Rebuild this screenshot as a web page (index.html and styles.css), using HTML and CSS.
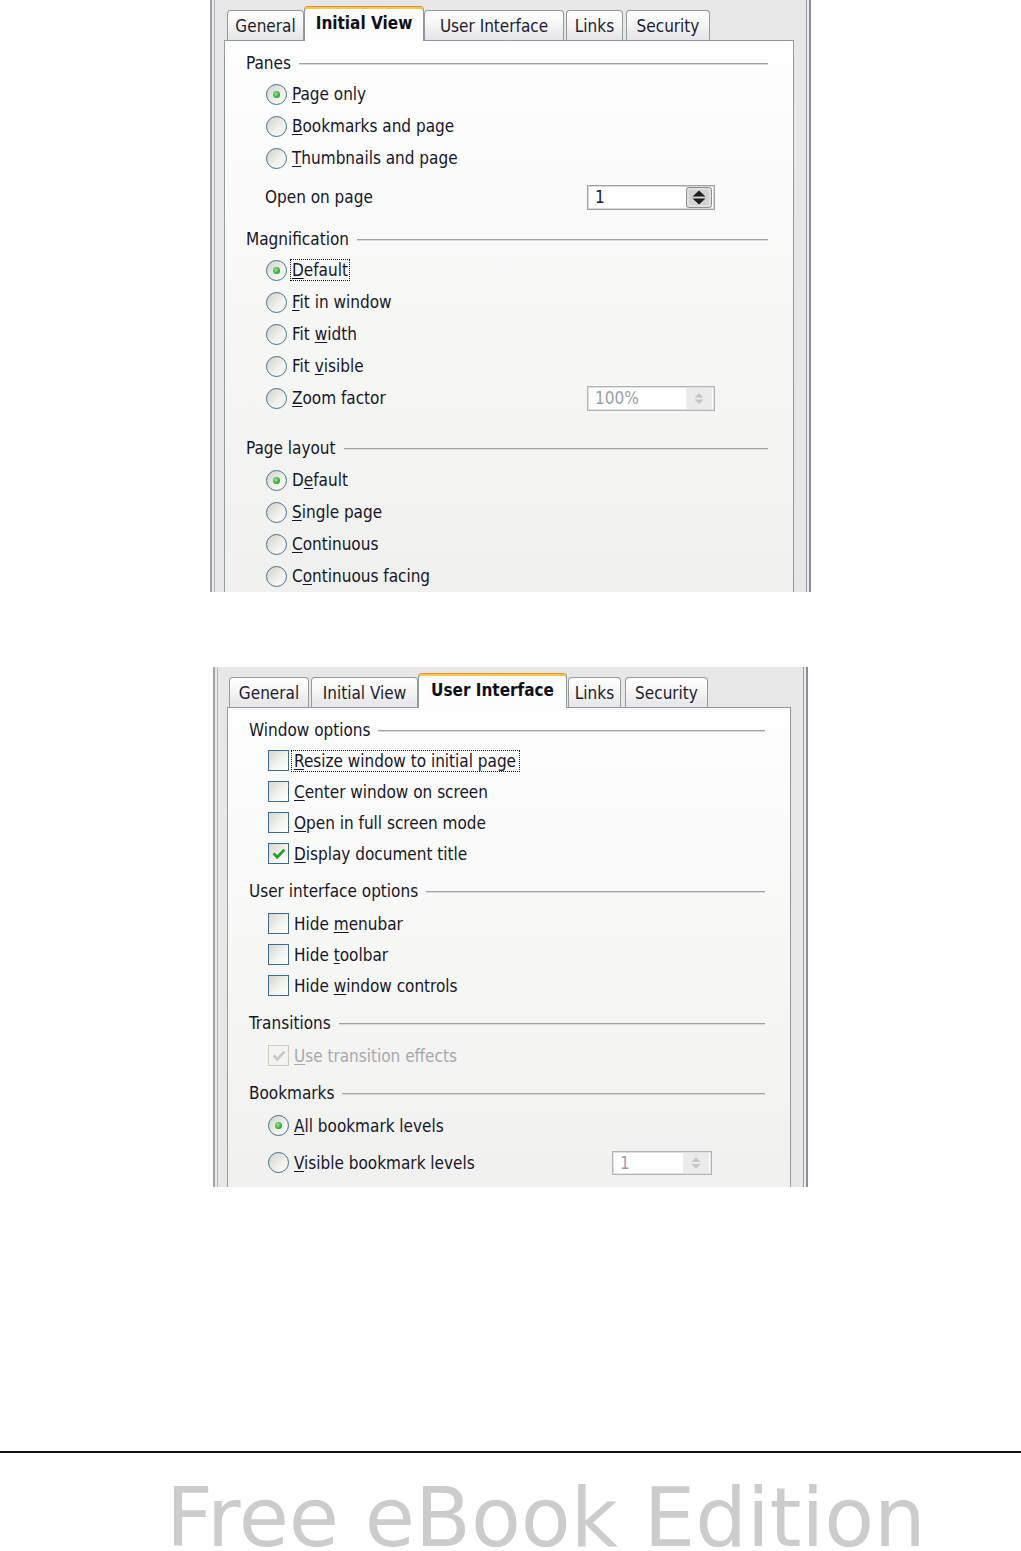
FILE: index.html
```html
<!DOCTYPE html>
<html>
<head>
<meta charset="utf-8">
<title>PDF Options</title>
<link rel="stylesheet" href="styles.css">
</head>
<body>
<div class="dlg dlg1">
  <div class="tabs">
    <div class="tab w-gen1">General</div>
    <div class="tab active w-init1">Initial View</div>
    <div class="tab w-ui1">User Interface</div>
    <div class="tab w-links1">Links</div>
    <div class="tab w-sec1">Security</div>
  </div>
  <div class="panel">
    <div class="sec first"><span>Panes</span><i class="rule"></i></div>
    <div class="opt"><span class="radio on"></span><span class="lbl"><u>P</u>age only</span></div>
    <div class="opt"><span class="radio"></span><span class="lbl"><u>B</u>ookmarks and page</span></div>
    <div class="opt"><span class="radio"></span><span class="lbl"><u>T</u>humbnails and page</span></div>
    <div class="opt plain openrow"><span>Open on pa<u>g</u>e</span>
      <span class="spin"><span class="val">1</span>
        <svg class="spinbtn" width="26" height="21" viewBox="0 0 26 21"><rect x="0.5" y="0.5" width="25" height="20" rx="2" fill="#d2d2d2" stroke="#8e8e8e"/><rect x="2" y="2" width="22" height="17" rx="1" fill="none" stroke="#ececec"/><path d="M13 3.5 L19.5 9.6 H6.5 Z M13 17.5 L19.5 11.4 H6.5 Z" fill="#1e1e1e"/></svg>
      </span>
    </div>
    <div class="sec mag"><span>Magnification</span><i class="rule"></i></div>
    <div class="opt"><span class="radio on"></span><span class="lbl focus r"><u>D</u>efault</span></div>
    <div class="opt"><span class="radio"></span><span class="lbl"><u>F</u>it in window</span></div>
    <div class="opt"><span class="radio"></span><span class="lbl">Fit <u>w</u>idth</span></div>
    <div class="opt"><span class="radio"></span><span class="lbl">Fit <u>v</u>isible</span></div>
    <div class="opt"><span class="radio"></span><span class="lbl"><u>Z</u>oom factor</span>
      <span class="spin dis"><span class="val">100%</span>
        <svg class="spinbtn" width="26" height="21" viewBox="0 0 26 21"><rect x="0" y="0" width="26" height="21" rx="2" fill="#ebebeb"/><path d="M13 5 L17.5 9.4 H8.5 Z M13 16 L17.5 11.6 H8.5 Z" fill="#c4c4c4"/></svg>
      </span>
    </div>
    <div class="sec layout"><span>Page layout</span><i class="rule"></i></div>
    <div class="opt after-layout"><span class="radio on"></span><span class="lbl">D<u>e</u>fault</span></div>
    <div class="opt"><span class="radio"></span><span class="lbl"><u>S</u>ingle page</span></div>
    <div class="opt"><span class="radio"></span><span class="lbl"><u>C</u>ontinuous</span></div>
    <div class="opt"><span class="radio"></span><span class="lbl">C<u>o</u>ntinuous facing</span></div>
  </div>
</div>

<div class="dlg dlg2">
  <div class="tabs">
    <div class="tab w-gen2">General</div>
    <div class="tab w-init2">Initial View</div>
    <div class="tab active w-ui2">User Interface</div>
    <div class="tab w-links2">Links</div>
    <div class="tab w-sec2">Security</div>
  </div>
  <div class="panel">
    <div class="sec first"><span>Window options</span><i class="rule"></i></div>
    <div class="opt"><span class="check"></span><span class="lbl focus c"><u>R</u>esize window to initial page</span></div>
    <div class="opt"><span class="check"></span><span class="lbl"><u>C</u>enter window on screen</span></div>
    <div class="opt"><span class="check"></span><span class="lbl"><u>O</u>pen in full screen mode</span></div>
    <div class="opt"><span class="check on"><svg width="18" height="18" viewBox="0 0 18 18"><path d="M3.6 8.4 L7.2 12.2 L14.4 4.6" fill="none" stroke="#21a121" stroke-width="2.8"/></svg></span><span class="lbl"><u>D</u>isplay document title</span></div>
    <div class="sec"><span>User interface options</span><i class="rule"></i></div>
    <div class="opt firstitem"><span class="check"></span><span class="lbl">Hide <u>m</u>enubar</span></div>
    <div class="opt"><span class="check"></span><span class="lbl">Hide <u>t</u>oolbar</span></div>
    <div class="opt"><span class="check"></span><span class="lbl">Hide <u>w</u>indow controls</span></div>
    <div class="sec"><span>Transitions</span><i class="rule"></i></div>
    <div class="opt firstitem"><span class="check dis"><svg width="18" height="18" viewBox="0 0 18 18"><path d="M3.6 8.4 L7.2 12.2 L14.4 4.6" fill="none" stroke="#c8c8c8" stroke-width="2.8"/></svg></span><span class="lbl dis"><u>U</u>se transition effects</span></div>
    <div class="sec"><span>Bookmarks</span><i class="rule"></i></div>
    <div class="opt firstitem"><span class="radio on"></span><span class="lbl"><u>A</u>ll bookmark levels</span></div>
    <div class="opt visrow"><span class="radio"></span><span class="lbl"><u>V</u>isible bookmark levels</span>
      <span class="spin dis narrow"><span class="val">1</span>
        <svg class="spinbtn" width="26" height="20" viewBox="0 0 26 20"><rect x="0" y="0" width="26" height="20" rx="2" fill="#ebebeb"/><path d="M13 4.5 L17.5 9 H8.5 Z M13 15.5 L17.5 11 H8.5 Z" fill="#c4c4c4"/></svg>
      </span>
    </div>
  </div>
</div>

<div class="footer">
  <div class="footrule"></div>
  <div class="edition">Free eBook Edition</div>
</div>
</body>
</html>
```

FILE: styles.css
```css
html, body {
  margin: 0;
  padding: 0;
  background: #ffffff;
}

body {
  font-family: "DejaVu Sans Condensed", "DejaVu Sans", sans-serif;
  font-stretch: condensed;
  color: #16162a;
  height: 1551px;
  overflow: hidden;
}

.dlg {
  box-sizing: border-box;
  background: #e7e7e7;
  border-left: 2px solid #a0a0a8;
  border-right: 2px solid #8c8c98;
  box-shadow: inset 2px 0 0 #ececec, inset 3px 0 0 #b2b2ba,
              inset -2px 0 0 #ececec, inset -3px 0 0 #9a9aa6;
  overflow: hidden;
  display: flex;
  flex-direction: column;
}

.dlg1 {
  width: 601px;
  height: 592px;
  margin-left: 210px;
}

.dlg2 {
  width: 595px;
  height: 520px;
  margin-left: 213px;
  margin-top: 75px;
}

.tabs {
  display: flex;
  align-items: flex-end;
  height: 40px;
  flex: none;
}

.dlg1 .tabs { padding-left: 15px; }
.dlg2 .tabs { padding-left: 14px; }

.tab {
  box-sizing: border-box;
  height: 30px;
  border: 1px solid #919b9c;
  border-bottom: 0;
  border-radius: 4px 4px 0 0;
  background: linear-gradient(#ffffff, #f6f6f4 45%, #e4e4ea);
  display: flex;
  align-items: center;
  justify-content: center;
  font-size: 17px;
  color: #1c1c30;
  padding-top: 1px;
  flex: none;
}

.tab.active {
  height: 35px;
  margin-bottom: -1px;
  background: #fdfdfd;
  border-top: 1px solid #e3912e;
  box-shadow: inset 0 2px 0 #fcc646;
  font-weight: bold;
  position: relative;
  z-index: 1;
  padding-top: 0;
  padding-bottom: 2px;
  color: #101018;
}

.w-gen1 { width: 77px; }
.w-init1 { width: 120px; }
.w-ui1 { width: 140px; }
.w-links1 { width: 57px; margin-left: 2px; }
.w-sec1 { width: 84px; margin-left: 3px; }

.w-gen2 { width: 80px; }
.w-init2 { width: 107px; margin-left: 2px; }
.w-ui2 { width: 149px; }
.w-links2 { width: 53px; margin-left: 1px; }
.w-sec2 { width: 83px; margin-left: 4px; }

.panel {
  box-sizing: border-box;
  flex: 1;
  margin: 0 15px 0 12px;
  border: 1px solid #919b9c;
  border-bottom: 0;
  background: linear-gradient(#fefefe, #f0f0ee);
  padding-top: 7px;
}

.sec {
  display: flex;
  align-items: center;
  height: 30px;
  padding: 0 25px 0 21px;
  font-size: 17px;
  white-space: nowrap;
}

.sec .rule {
  flex: 1;
  height: 0;
  border-top: 1px solid #a2a2a2;
  border-bottom: 1px solid #dadada;
  margin-left: 8px;
  margin-top: 1px;
}

.dlg1 .sec.mag { margin-top: 11px; }
.dlg1 .sec.layout { margin-top: 19px; }
.dlg2 .sec { margin-top: 7px; }
.dlg2 .sec.first { margin-top: 0; }

.opt {
  display: flex;
  align-items: center;
  height: 32px;
  padding-left: 41px;
  padding-right: 78px;
  font-size: 17px;
  white-space: nowrap;
}

.dlg2 .opt {
  height: 31px;
  padding-left: 40px;
}

.opt.plain { padding-left: 40px; }
.openrow { margin-top: 7px; }
.after-layout { margin-top: 1px; }
.dlg2 .firstitem { margin-top: 2px; }
.dlg2 .visrow { margin-top: 6px; }

.lbl { margin-left: 5px; }
.lbl.dis { color: #a8a8b0; }

u {
  text-decoration: underline;
  text-underline-offset: 2px;
}

.focus {
  border: 1px dotted #1a1a1a;
  padding: 1px 1px;
  line-height: 18px;
}
.focus.r { margin-left: 3px; }
.focus.c { margin-left: 2px; padding: 1px 3px 1px 2px; }

.radio {
  flex: none;
  box-sizing: border-box;
  width: 21px;
  height: 21px;
  border-radius: 50%;
  border: 1.6px solid #43708f;
  background: linear-gradient(135deg, #d2d2cc, #efefea 55%, #ffffff);
  display: flex;
  align-items: center;
  justify-content: center;
}

.radio.on::after {
  content: "";
  width: 7px;
  height: 7px;
  border-radius: 50%;
  background: radial-gradient(circle at 40% 40%, #9be59b, #22a522 70%);
}

.check {
  flex: none;
  box-sizing: border-box;
  width: 21px;
  height: 21px;
  border: 1.6px solid #3e6a8e;
  background: linear-gradient(135deg, #d6d6d0, #f3f3ef 55%, #ffffff);
  display: flex;
  align-items: center;
  justify-content: center;
}

.check.dis {
  border-color: #cbcbc2;
  background: #f3f3f0;
}

.spin {
  margin-left: auto;
  box-sizing: border-box;
  width: 128px;
  height: 25px;
  border: 1px solid #a2a2a6;
  box-shadow: inset 0 0 0 1px #d8d8d8;
  background: #ffffff;
  display: flex;
  align-items: center;
  justify-content: space-between;
  padding: 0 2px 0 7px;
  font-size: 17px;
}

.spin.dis {
  border-color: #b4b4b8;
  box-shadow: inset 0 0 0 1px #e0e0e0;
}

.spin.dis .val { color: #9c9cab; }

.spin.narrow {
  width: 100px;
  height: 24px;
}

.spinbtn { display: block; }

.footer {
  margin-top: 264px;
}

.footrule {
  height: 2px;
  background: #111111;
}

.edition {
  margin-top: 33px;
  padding-left: 166px;
  font-family: "DejaVu Sans", sans-serif;
  font-stretch: normal;
  font-size: 81.5px;
  line-height: 64px;
  color: #cccccc;
  white-space: nowrap;
}
```
